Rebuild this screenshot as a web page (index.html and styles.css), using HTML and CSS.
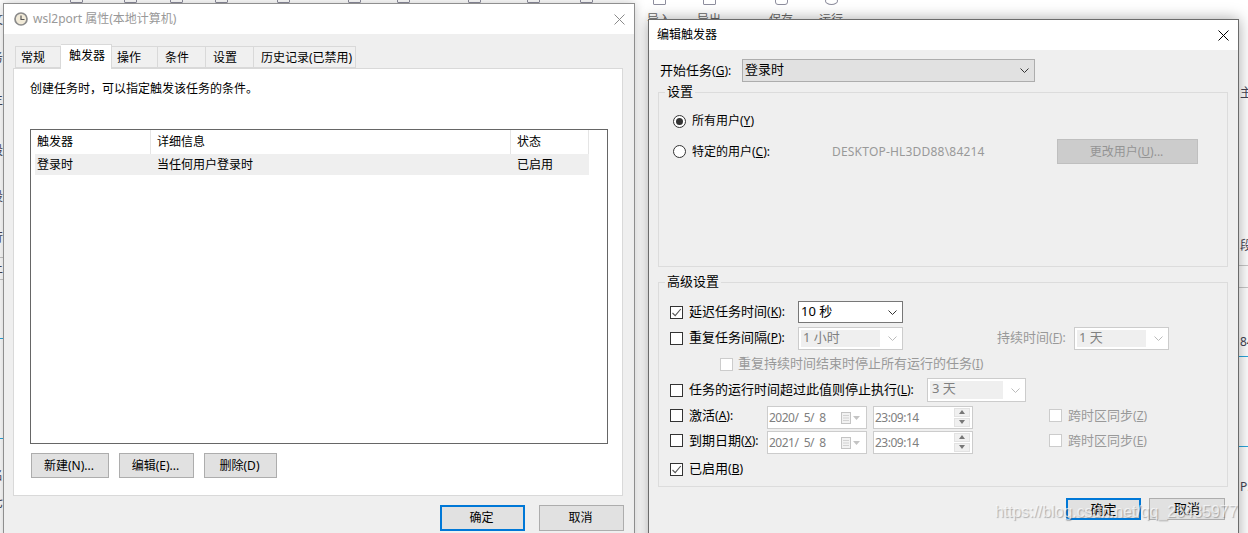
FILE: index.html
```html
<!DOCTYPE html>
<html lang="zh-CN">
<head>
    <meta charset="UTF-8">
    <title>编辑触发器</title>
    <link rel="stylesheet" href="styles.css">
</head>
<body>

    <!-- aplikacja w tle, prawie cala zakryta oknami -->
    <div class="bg-toolbar">
        <span class="bg-icon"></span><span class="bg-icon"></span><span class="bg-icon"></span>
        <span class="bg-icon"></span><span class="bg-icon"></span><span class="bg-icon"></span>
        <span class="bg-icon"></span><span class="bg-icon"></span><span class="bg-icon"></span>
        <span class="bg-icon"></span>
    </div>
    <div class="bg-tools">
        <div class="bg-tool"><span class="bg-icon"></span>导入</div>
        <div class="bg-tool"><span class="bg-icon"></span>导出</div>
        <div class="bg-tool"><span class="bg-icon round"></span>保存</div>
        <div class="bg-tool"><span class="bg-icon circle"></span>运行</div>
    </div>
    <span class="edge edge-l e-l1">文</span>
    <span class="edge edge-l e-l2">务</span>
    <span class="edge edge-l e-l3">主</span>
    <span class="edge edge-l e-l4">段</span>
    <span class="edge edge-l e-l5">设</span>
    <span class="edge edge-l e-l6">行</span>
    <span class="edge edge-l e-l7">上</span>
    <span class="edge edge-l e-l8">名</span>
    <span class="edge edge-l e-l9">七</span>
    <span class="edge edge-r e-r1">主</span>
    <span class="edge edge-r e-r2">段</span>
    <span class="edge edge-r e-r3">84</span>
    <span class="edge edge-r e-r4">P:</span>
    <span class="edge-line edge-line-l line-a"></span>
    <span class="edge-line edge-line-l line-b"></span>
    <span class="edge-line edge-line-l blue line-c"></span>
    <span class="edge-line edge-line-l blue line-d"></span>
    <span class="edge-line edge-line-r line-e"></span>
    <span class="edge-line edge-line-r line-f"></span>
    <span class="edge-line edge-line-r blue line-g"></span>
    <span class="edge-line edge-line-r blue line-h"></span>

    <!-- okno wlasciwosci -->
    <div class="win win-props">
        <div class="titlebar">
            <svg class="clock" width="14" height="14" viewBox="0 0 14 14">
                <circle cx="7" cy="7" r="6" fill="#f1ead8" stroke="#8b8b8b" stroke-width="1.7"/>
                <path d="M7 3.5V7.5H10.5" fill="none" stroke="#555" stroke-width="1.2"/>
            </svg>
            <span class="title-gray">wsl2port 属性(本地计算机)</span>
            <svg class="close" width="11" height="11" viewBox="0 0 11 11">
                <path d="M0.5 0.5L10.5 10.5M10.5 0.5L0.5 10.5" stroke="#8a8a8a" fill="none"/>
            </svg>
        </div>
        <div class="tabs">
            <div class="tab tab-1">常规</div>
            <div class="tab tab-2 active">触发器</div>
            <div class="tab tab-3">操作</div>
            <div class="tab tab-4">条件</div>
            <div class="tab tab-5">设置</div>
            <div class="tab tab-6">历史记录(已禁用)</div>
        </div>
        <div class="tab-page">
            <div class="desc">创建任务时，可以指定触发该任务的条件。</div>
            <div class="list">
                <div class="list-row list-head">
                    <div class="cell">触发器</div>
                    <div class="cell">详细信息</div>
                    <div class="cell">状态</div>
                </div>
                <div class="list-row list-sel">
                    <div class="cell">登录时</div>
                    <div class="cell">当任何用户登录时</div>
                    <div class="cell">已启用</div>
                </div>
            </div>
            <div class="list-btns">
                <button class="btn btn-new">新建(N)...</button>
                <button class="btn btn-edit">编辑(E)...</button>
                <button class="btn btn-del">删除(D)</button>
            </div>
        </div>
        <div class="footer footer-props">
            <button class="btn btn-ok default">确定</button>
            <button class="btn btn-ok">取消</button>
        </div>
    </div>

    <!-- okno edycji wyzwalacza -->
    <div class="win win-edit">
        <div class="titlebar">
            <span>编辑触发器</span>
            <svg class="close" width="11" height="11" viewBox="0 0 11 11">
                <path d="M0.5 0.5L10.5 10.5M10.5 0.5L0.5 10.5" stroke="#000" fill="none"/>
            </svg>
        </div>
        <div class="edit-body">
            <div class="start-row">
                <label class="start-label">开始任务<span class="key">(<u>G</u>):</span></label>
                <div class="combo combo-start">
                    <span class="combo-text">登录时</span>
                    <svg class="chev" width="9" height="5" viewBox="0 0 9 5"><path d="M0.5 0.5L4.5 4.500L8.500 0.5" fill="none" stroke="#333"/></svg>
                </div>
            </div>

            <div class="group group-settings">
                <div class="legend">设置</div>
                <div class="row row-radio1">
                    <span class="radio checked"></span>
                    <span>所有用户(<u>Y</u>)</span>
                </div>
                <div class="row row-radio2">
                    <span class="radio"></span>
                    <span class="radio-label">特定的用户(<u>C</u>):</span>
                    <span class="user-name">DESKTOP-HL3DD88\84214</span>
                    <button class="btn btn-user" disabled>更改用户(<u>U</u>)...</button>
                </div>
            </div>

            <div class="group group-adv">
                <div class="legend">高级设置</div>

                <div class="row r22">
                    <span class="check"><svg width="11" height="11" viewBox="0 0 11 11"><path d="M1.500 6L4.200 8.700L9.800 2" fill="none" stroke="#555" stroke-width="1.1"/></svg></span>
                    <span class="lab lab-a">延迟任务时间<span class="key">(<u>K</u>):</span></span>
                    <div class="combo combo-delay">
                        <span class="combo-text">10 秒</span>
                        <svg class="chev" width="9" height="5" viewBox="0 0 9 5"><path d="M0.5 0.5L4.5 4.500L8.500 0.5" fill="none" stroke="#333"/></svg>
                    </div>
                </div>

                <div class="row r23">
                    <span class="check"></span>
                    <span class="lab lab-a">重复任务间隔<span class="key">(<u>P</u>):</span></span>
                    <div class="combo off combo-delay">
                        <span class="combo-text">1 小时</span>
                        <svg class="chev" width="9" height="5" viewBox="0 0 9 5"><path d="M0.5 0.5L4.5 4.500L8.500 0.5" fill="none" stroke="#bbb"/></svg>
                    </div>
                    <span class="lab lab-dur off-text">持续时间<span class="key">(<u>F</u>):</span></span>
                    <div class="combo off combo-dur">
                        <span class="combo-text">1 天</span>
                        <svg class="chev" width="9" height="5" viewBox="0 0 9 5"><path d="M0.5 0.5L4.5 4.500L8.500 0.5" fill="none" stroke="#bbb"/></svg>
                    </div>
                </div>

                <div class="row r20 sub-row">
                    <span class="check off"></span>
                    <span class="off-text">重复持续时间结束时停止所有运行的任务<span class="key">(<u>I</u>)</span></span>
                </div>

                <div class="row r24">
                    <span class="check"></span>
                    <span class="lab lab-b">任务的运行时间超过此值则停止执行<span class="key">(<u>L</u>):</span></span>
                    <div class="combo off combo-stop">
                        <span class="combo-text">3 天</span>
                        <svg class="chev" width="9" height="5" viewBox="0 0 9 5"><path d="M0.5 0.5L4.5 4.500L8.500 0.5" fill="none" stroke="#bbb"/></svg>
                    </div>
                </div>

                <div class="row r23 r-date">
                    <span class="check"></span>
                    <span class="lab lab-c">激活<span class="key">(<u>A</u>):</span></span>
                    <div class="field date">
                        <span>2020/&nbsp;&nbsp;5/&nbsp;&nbsp;8</span>
                        <svg width="20" height="12" viewBox="0 0 20 12"><rect x="1.500" y="0.5" width="9" height="11" fill="#f2f2f2" stroke="#c4c4c4"/><path d="M3 3.500H9M3 6H9M3 8.500H9" stroke="#d2d2d2"/><path d="M13 4H20L16.500 8Z" fill="#c4c4c4"/></svg>
                    </div>
                    <div class="field time">
                        <span>23:09:14</span>
                        <div class="spin"><span class="spin-up"></span><span class="spin-down"></span></div>
                    </div>
                    <span class="check off tz-check"></span>
                    <span class="off-text">跨时区同步<span class="key">(<u>Z</u>)</span></span>
                </div>

                <div class="row r23 r-date tight">
                    <span class="check"></span>
                    <span class="lab lab-c">到期日期<span class="key">(<u>X</u>):</span></span>
                    <div class="field date">
                        <span>2021/&nbsp;&nbsp;5/&nbsp;&nbsp;8</span>
                        <svg width="20" height="12" viewBox="0 0 20 12"><rect x="1.500" y="0.5" width="9" height="11" fill="#f2f2f2" stroke="#c4c4c4"/><path d="M3 3.500H9M3 6H9M3 8.500H9" stroke="#d2d2d2"/><path d="M13 4H20L16.500 8Z" fill="#c4c4c4"/></svg>
                    </div>
                    <div class="field time">
                        <span>23:09:14</span>
                        <div class="spin"><span class="spin-up"></span><span class="spin-down"></span></div>
                    </div>
                    <span class="check off tz-check"></span>
                    <span class="off-text">跨时区同步<span class="key">(<u>E</u>)</span></span>
                </div>

                <div class="row r20 last-row">
                    <span class="check"><svg width="11" height="11" viewBox="0 0 11 11"><path d="M1.500 6L4.200 8.700L9.800 2" fill="none" stroke="#555" stroke-width="1.1"/></svg></span>
                    <span class="lab">已启用<span class="key">(<u>B</u>)</span></span>
                </div>
            </div>

            <div class="footer footer-edit">
                <button class="btn btn-small default">确定</button>
                <button class="btn btn-small">取消</button>
            </div>
        </div>
    </div>

    <div class="watermark">https://blog.csdn.net/qq_26435977</div>

</body>
</html>
```

FILE: styles.css
```css
* {
    box-sizing: border-box;
}

html, body {
    margin: 0;
    padding: 0;
    height: 533px;
    overflow: hidden;
}

body {
    position: relative;
    width: 1248px;
    background: #fff;
    color: #000;
    font-family: "Noto Sans", "Noto Sans CJK SC", sans-serif;
    font-size: 12px;
    line-height: 18px;
}

/* tlo */
.bg-toolbar {
    position: absolute;
    top: -3px;
    left: 70px;
    display: grid;
    grid-template-columns: 54px 46px 45px 62px 71px 49px 71px 59px 53px 13px;
}

.bg-icon {
    display: block;
    width: 13px;
    height: 8px;
    border: 1px solid #8e8e9e;
    border-radius: 1px;
}

.bg-toolbar .bg-icon {
    height: 6px;
}

.bg-icon.round {
    border-radius: 3px;
}

.bg-icon.circle {
    border-radius: 50%;
}

.bg-tools {
    position: absolute;
    top: -3px;
    left: 646px;
    display: flex;
    color: #666;
}

.bg-tool {
    width: 26px;
    display: flex;
    flex-direction: column;
    align-items: center;
    gap: 6px;
}

.bg-tool:nth-child(2) {
    margin-left: 24px;
}

.bg-tool:nth-child(3) {
    margin-left: 46px;
}

.bg-tool:nth-child(4) {
    margin-left: 24px;
}

.edge {
    position: absolute;
    font-size: 12px;
    color: #445;
}

.edge-l {
    left: -9px;
}

.edge-r {
    left: 1240px;
}

.e-l1 { top: 11px; }
.e-l2 { top: 49px; }
.e-l3 { top: 91px; }
.e-l4 { top: 142px; }
.e-l5 { top: 188px; }
.e-l6 { top: 229px; }
.e-l7 { top: 260px; }
.e-l8 { top: 467px; }
.e-l9 { top: 494px; }
.e-r1 { top: 84px; }
.e-r2 { top: 237px; }
.e-r3 { top: 333px; }
.e-r4 { top: 478px; }

.edge-line {
    position: absolute;
    height: 1px;
    background: #c8c8c8;
}

.edge-line.blue {
    background: #2aa6dc;
}

.edge-line-l {
    left: 0;
    width: 4px;
}

.edge-line-r {
    left: 1239px;
    width: 9px;
}

.line-a { top: 257px; }
.line-b { top: 279px; }
.line-c { top: 338px; }
.line-d { top: 438px; }
.line-e { top: 265px; }
.line-f { top: 287px; }
.line-g { top: 356px; }
.line-h { top: 446px; }

/* okna */
.win {
    position: absolute;
    background: #efefef;
    border: 1px solid #8f8f8f;
    box-shadow: 0 0 10px rgba(0, 0, 0, 0.22);
}

.win-props {
    left: 3px;
    top: 3px;
    width: 632px;
    height: 540px;
}

.win-edit {
    left: 648px;
    top: 19px;
    width: 591px;
    height: 530px;
    border-color: #6b6b6b;
    box-shadow: 0 0 14px rgba(0, 0, 0, 0.35);
}

.titlebar {
    display: flex;
    align-items: center;
    height: 30px;
    padding-left: 8px;
    background: #fff;
}

.win-props .titlebar {
    padding-left: 10px;
}

.title-gray {
    margin-left: 5px;
    color: #999;
}

.close {
    margin-left: auto;
    margin-right: 9px;
}

/* zakladki */
.tabs {
    display: flex;
    align-items: flex-end;
    height: 24px;
    margin-top: 10px;
    padding-left: 11px;
}

.tab {
    height: 22px;
    padding-left: 7px;
    background: #f0f0f0;
    border: 1px solid #d9d9d9;
    border-left: 0;
    line-height: 22px;
}

.tab-1 {
    width: 46px;
    padding-left: 5px;
    border-left: 1px solid #d9d9d9;
}

.tab-2 {
    width: 51px;
}

.tab-3 {
    width: 46px;
    padding-left: 5px;
}

.tab-4 {
    width: 48px;
}

.tab-5 {
    width: 48px;
}

.tab-6 {
    width: 102px;
}

.tab.active {
    position: relative;
    height: 25px;
    margin-bottom: -1px;
    padding-left: 8px;
    background: #fff;
    border-bottom: 0;
    line-height: 22px;
}

.tab-page {
    width: 610px;
    height: 428px;
    margin-left: 9px;
    padding: 11px 16px 0;
    background: #fff;
    border: 1px solid #d9d9d9;
}

.desc {
    height: 18px;
}

.list {
    width: 578px;
    height: 315px;
    margin-top: 31px;
    padding-left: 4px;
    border: 1px solid #666;
}

.list-row {
    display: grid;
    grid-template-columns: 116px 360px 78px;
    width: 554px;
}

.list-head {
    height: 24px;
}

.list-head .cell {
    border-right: 1px solid #e5e5e5;
    line-height: 23px;
}

.list-sel {
    height: 21px;
    background: #efefef;
    line-height: 21px;
}

.cell {
    padding-left: 6px;
}

.cell:first-child {
    padding-left: 2px;
}

.list-btns {
    display: flex;
    gap: 10px;
    margin: 9px 0 0 1px;
}

/* przyciski */
.btn {
    height: 25px;
    padding: 0 2px 0 0;
    background: #e1e1e1;
    border: 1px solid #adadad;
    color: #000;
    font: inherit;
}

.btn-new {
    width: 78px;
}

.btn-edit {
    width: 75px;
}

.btn-del {
    width: 73px;
}

.btn-ok {
    width: 85px;
    height: 26px;
}

.btn-small {
    width: 76px;
    height: 22px;
    padding: 0 0 2px;
    line-height: 18px;
    font-size: 13px;
}

.btn-small.default {
    width: 75px;
}

.btn.default {
    border: 2px solid #0078d7;
}

.footer {
    display: flex;
    justify-content: flex-end;
}

.footer-props {
    gap: 14px;
    margin-top: 9px;
    padding-right: 10px;
}

.footer-edit {
    gap: 8px;
    margin-top: 11px;
    padding-right: 3px;
}

/* edycja wyzwalacza */
.edit-body {
    padding: 9px 10px 0 9px;
}

.start-row {
    display: flex;
    align-items: center;
    height: 23px;
    font-size: 13px;
}

.start-label {
    width: 84px;
    padding-left: 2px;
}

.key {
    font-size: 12px;
}

.combo {
    display: flex;
    align-items: center;
    justify-content: space-between;
    height: 100%;
    padding-right: 5px;
    background: #fff;
    border: 1px solid #777;
}

.combo-start {
    width: 293px;
    background: #e1e1e1;
    border-color: #adadad;
}

.combo-text {
    padding: 0 0 3px 2px;
}

.combo.off {
    padding: 2px 5px 2px 2px;
    border-color: #ccc;
}

.combo.off .combo-text {
    flex: 1;
    height: 100%;
    margin-right: 8px;
    padding-bottom: 0;
    background: #efefef;
    color: #808080;
    line-height: 15px;
}

.combo-delay {
    width: 105px;
}

.combo-dur {
    width: 95px;
}

.combo-stop {
    width: 99px;
}

.group {
    position: relative;
    width: 570px;
    border: 1px solid #dcdcdc;
}

.legend {
    position: absolute;
    top: -10px;
    left: 6px;
    padding: 0 2px;
    background: #efefef;
    font-size: 13px;
    line-height: 16px;
}

.group-settings {
    height: 175px;
    margin-top: 10px;
    padding: 18px 0 0 14px;
}

.group-adv {
    height: 205px;
    margin-top: 15px;
    padding: 18px 0 0 11px;
    font-size: 13px;
}

.row {
    display: flex;
    align-items: center;
}

.row-radio1 {
    height: 20px;
    gap: 6px;
}

.row-radio2 {
    height: 25px;
    margin-top: 8px;
    gap: 6px;
}

.radio {
    position: relative;
    flex: none;
    width: 13px;
    height: 13px;
    background: #fff;
    border: 1px solid #333;
    border-radius: 50%;
}

.radio.checked::after {
    content: "";
    position: absolute;
    top: 2px;
    left: 2px;
    width: 7px;
    height: 7px;
    background: #333;
    border-radius: 50%;
}

.radio-label {
    width: 134px;
}

.user-name {
    width: 219px;
    color: #999;
    letter-spacing: 0.2px;
}

.btn-user {
    width: 141px;
    background: #ccc;
    border-color: #bfbfbf;
    color: #949494;
}

.r20 {
    height: 20px;
    margin-bottom: 4px;
}

.r22 {
    height: 22px;
    margin-bottom: 4px;
}

.r23 {
    height: 23px;
    margin-bottom: 4px;
}

.r24 {
    height: 24px;
    margin-bottom: 4px;
}

.r23.tight {
    margin-top: -2px;
    margin-bottom: 5px;
}

.check {
    display: flex;
    align-items: center;
    justify-content: center;
    flex: none;
    width: 13px;
    height: 13px;
    margin-right: 6px;
    background: #fff;
    border: 1px solid #333;
}

.check.off {
    border-color: #ccc;
}

.lab,
.sub-row .off-text {
    flex: none;
    margin-bottom: 2px;
}

/* w wierszach z data pole jest nizej niz etykieta */
.r-date .check,
.r-date .lab,
.r-date .off-text {
    margin-bottom: 4px;
}

.lab-a {
    width: 109px;
}

.lab-b {
    width: 238px;
}

.lab-c {
    width: 78px;
}

.lab-dur {
    width: 77px;
    margin-left: 94px;
}

.off-text {
    color: #999;
}

.sub-row {
    padding-left: 50px;
}

.sub-row .check {
    margin-right: 5px;
}

.field {
    display: flex;
    align-items: center;
    justify-content: space-between;
    height: 100%;
    padding: 0 6px 0 1px;
    background: #fff;
    border: 1px solid #ccc;
    color: #808080;
    font-size: 12px;
    letter-spacing: -0.5px;
}

.date {
    width: 100px;
}

.time {
    width: 100px;
    margin-left: 6px;
    padding-right: 2px;
}

.spin {
    display: flex;
    flex-direction: column;
    gap: 1px;
}

.spin span {
    position: relative;
    display: block;
    width: 16px;
    height: 9px;
    background: #f0f0f0;
    border: 1px solid #e2e2e2;
}

.spin span::after {
    content: "";
    position: absolute;
    top: 1px;
    left: 4px;
    border-left: 3px solid transparent;
    border-right: 3px solid transparent;
}

.spin-up::after {
    border-bottom: 4px solid #777;
}

.spin-down::after {
    border-top: 4px solid #777;
}

.tz-check {
    margin-left: 76px;
}

.watermark {
    position: absolute;
    top: 500px;
    left: 995px;
    color: rgba(255, 255, 255, 0.65);
    font-family: "Liberation Sans", sans-serif;
    font-size: 15.8px;
    line-height: 24px;
    text-shadow: 1px 1px 1px rgba(90, 90, 90, 0.45);
    white-space: nowrap;
}
```
